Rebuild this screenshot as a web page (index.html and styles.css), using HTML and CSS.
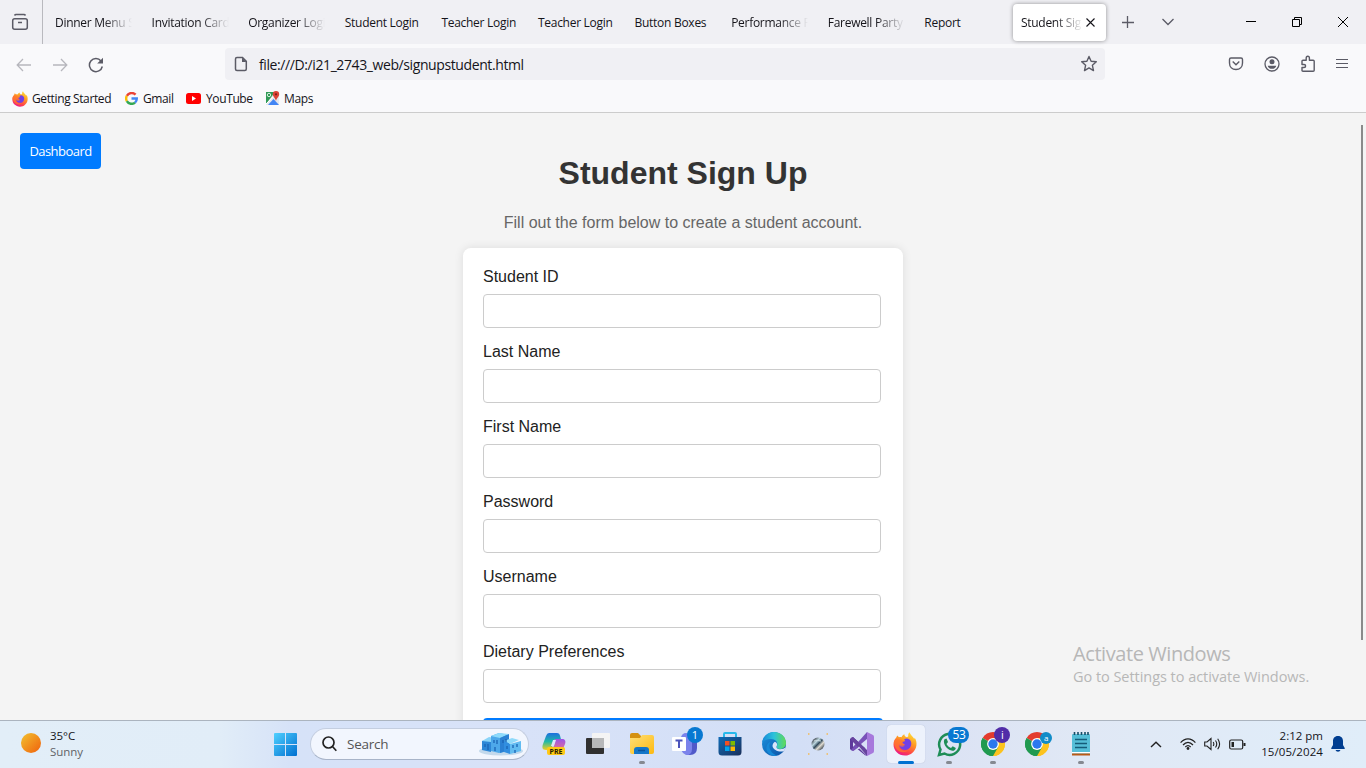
FILE: index.html
```html
<!DOCTYPE html>
<html lang="en">
<head>
<meta charset="utf-8">
<title>Student Sign Up</title>
<link rel="stylesheet" href="styles.css">
</head>
<body>
<svg class="defs" width="0" height="0">
  <defs>
    <linearGradient id="fxBody" x1=".8" y1="0" x2=".3" y2="1"><stop offset="0" stop-color="#ffe33c"/><stop offset=".4" stop-color="#ff9a22"/><stop offset=".75" stop-color="#ff4548"/><stop offset="1" stop-color="#e9158f"/></linearGradient>
    <linearGradient id="win" x1="0" y1="0" x2="1" y2="1"><stop offset="0" stop-color="#50d0ff"/><stop offset="1" stop-color="#006fd0"/></linearGradient>
    <linearGradient id="sun" x1="0" y1="0" x2="1" y2="1"><stop offset="0" stop-color="#f2c230"/><stop offset="1" stop-color="#f0600c"/></linearGradient>
    <linearGradient id="copA" x1="0" y1="0" x2="0" y2="1"><stop offset="0" stop-color="#1d6fe0"/><stop offset=".5" stop-color="#20b9a7"/><stop offset="1" stop-color="#f2cf20"/></linearGradient>
    <linearGradient id="copB" x1="0" y1="0" x2="0" y2="1"><stop offset="0" stop-color="#9b55e8"/><stop offset="1" stop-color="#ff7b72"/></linearGradient>
    <linearGradient id="folder" x1="0" y1="0" x2="1" y2="1"><stop offset="0" stop-color="#ffe07a"/><stop offset="1" stop-color="#fdb90f"/></linearGradient>
    <linearGradient id="edgeTop" x1="0" y1="0" x2="1" y2="0"><stop offset="0" stop-color="#1787d8"/><stop offset=".5" stop-color="#2bc2db"/><stop offset="1" stop-color="#62dc55"/></linearGradient>
    <linearGradient id="edgeLow" x1="0" y1="0" x2="1" y2="1"><stop offset="0" stop-color="#1a94e0"/><stop offset="1" stop-color="#0d4fa3"/></linearGradient>
    <linearGradient id="store" x1="0" y1="0" x2="1" y2="1"><stop offset="0" stop-color="#0f6cb8"/><stop offset="1" stop-color="#1b2f5a"/></linearGradient>
    <linearGradient id="planet" x1="0" y1="0" x2="1" y2="1"><stop offset=".1" stop-color="#2e3038"/><stop offset=".35" stop-color="#bcd6df"/><stop offset=".5" stop-color="#344c5c"/><stop offset=".65" stop-color="#e0dcd2"/><stop offset=".9" stop-color="#26303a"/></linearGradient>
    <symbol id="firefox" viewBox="0 0 24 24">
      <path d="M3.300 5.600L4.200 3.400 6 5.300C7 4.900 8 5 8.600 5.200 9 3.800 10 3 11.400 2.300 11.300 4 12.400 4.700 14 5.300L15.300 4.200C15 2.500 15.600 1.200 16.500.3 17.300 3 20 4.600 21.300 7L21.700 5.800C23.300 8.300 23.800 10.600 23.400 13.400 22.500 19.300 17.800 23.500 12 23.500 5.500 23.500.5 18.700.5 12.500.5 9.700 1.500 7.300 3.300 5.600Z" fill="url(#fxBody)"/>
      <path d="M14.200 6.500C17.800 7.500 19 10.500 18 13.500 17 16.800 13.800 18.500 10.700 17.800 7.600 17.100 6 14.600 6.500 12 8 13.800 10 14 12 12.300 9.600 12 9 10.700 9.500 9.600L12 8.900 11.200 7.200C12.200 7 13.200 6.400 14.200 6.500Z" fill="#7140e5"/>
      <path d="M1 9.500C3.200 6.800 6.400 6.500 9 8.200L12 9 9.500 10.500C8.500 11 8.500 12.300 8 13L12 13.400C9.600 15.500 7 15 5.600 12.500 5.400 17.500 11 20.200 15.500 18 9.500 23.500.5 18 1 9.500Z" fill="#ff7a2c" opacity=".7"/>
    </symbol>
    <symbol id="chrome" viewBox="0 0 24 24">
      <path d="M12 12L1.610 6A12 12 0 0 1 22.390 6Z" fill="#e33b2e"/>
      <path d="M12 12L22.390 6A12 12 0 0 1 12 24Z" fill="#fcc31e"/>
      <path d="M12 12V24A12 12 0 0 1 1.610 6Z" fill="#209a50"/>
      <path d="M12 6H22.390A12 12 0 0 1 12 24L17.200 15Z" fill="#fcc31e"/>
      <path d="M1.610 6L6.800 15 12 17.500 17.200 15 12 24A12 12 0 0 1 1.610 6Z" fill="#209a50"/>
      <circle cx="12" cy="12" r="5.900" fill="#fff"/><circle cx="12" cy="12" r="4.700" fill="#2b78ee"/>
    </symbol>
  </defs>
</svg>

<header class="browser">
  <div class="tabstrip">
    <div class="recent"><svg width="18" height="18" viewBox="0 0 18 18" fill="none" stroke="#5b5b66" stroke-width="1.500"><rect x="1.700" y="5.700" width="14.600" height="10.600" rx="2"/><path d="M3.500 2.500C4 1.700 4.500 1.500 5 1.500H13C13.500 1.500 14 1.700 14.500 2.500M7 9.500H11"/></svg></div>
    <nav class="tabs">
      <div class="tab"><span class="fade">Dinner Menu S</span></div>
      <div class="tab"><span class="fade">Invitation Card</span></div>
      <div class="tab"><span class="fade">Organizer Logi</span></div>
      <div class="tab"><span>Student Login</span></div>
      <div class="tab"><span>Teacher Login</span></div>
      <div class="tab"><span>Teacher Login</span></div>
      <div class="tab"><span>Button Boxes</span></div>
      <div class="tab"><span class="fade">Performance P</span></div>
      <div class="tab"><span class="fade">Farewell Party</span></div>
      <div class="tab"><span>Report</span></div>
    </nav>
    <div class="active-tab"><span class="fade short">Student Sign</span><svg width="9" height="9" viewBox="0 0 9 9" stroke="#15141a" stroke-width="1.100"><path d="M.5.5L8.500 8.500M8.500.5L.5 8.500"/></svg></div>
    <div class="tab-tools">
      <svg width="12" height="12" viewBox="0 0 12 12" stroke="#5b5b66" stroke-width="1.300"><path d="M5.500 0V12M0 6.500H12"/></svg>
      <svg width="12" height="8" viewBox="0 0 12 8" fill="none" stroke="#5b5b66" stroke-width="1.300"><path d="M.5 1L6 6.500 11.500 1"/></svg>
    </div>
    <div class="window-tools">
      <svg width="10" height="10" viewBox="0 0 10 10" stroke="#000"><path d="M0 4.500H10"/></svg>
      <svg width="10" height="10" viewBox="0 0 10 10" fill="none" stroke="#000"><path d="M.5 2.500H7.500V9.500H.5ZM2.500 2.500V.5H9.500V7.500H7.500"/></svg>
      <svg width="10" height="10" viewBox="0 0 10 10" stroke="#000"><path d="M0 0L10 10M10 0L0 10"/></svg>
    </div>
  </div>
  <div class="toolbar">
    <div class="history">
      <svg width="16" height="14" viewBox="0 0 16 14" fill="none" stroke="#b7b7bd" stroke-width="1.300"><path d="M15 7H1.500M7 1L1.200 7 7 13"/></svg>
      <svg width="16" height="14" viewBox="0 0 16 14" fill="none" stroke="#b7b7bd" stroke-width="1.300"><path d="M1 7H14.500M9 1L14.800 7 9 13"/></svg>
      <svg width="16" height="16" viewBox="0 0 16 16" fill="none" stroke="#5b5b66" stroke-width="1.500"><path d="M13 4A6.500 6.500 0 1 0 14.300 9.500"/><path d="M15 .7V6.500H9.200Z" fill="#5b5b66" stroke="none"/></svg>
    </div>
    <div class="address">
      <svg width="14" height="16" viewBox="0 0 14 16" fill="none" stroke="#5b5b66" stroke-width="1.500"><path d="M3 1.500H8.500L12.300 5.300V13Q12.300 14.500 10.800 14.500H3Q1.500 14.500 1.500 13V3Q1.500 1.500 3 1.500Z"/><path d="M8 1.500V6H12.500Z" fill="#5b5b66" stroke="none"/></svg>
      <span class="url">file:///D:/i21_2743_web/signupstudent.html</span>
      <svg class="star" width="18" height="18" viewBox="0 0 18 18" fill="none" stroke="#5b5b66" stroke-width="1.400" stroke-linejoin="round"><path d="M9 1.500L11.100 6.300 16.300 6.800 12.400 10.300 13.500 15.600 9 12.900 4.500 15.600 5.600 10.300 1.700 6.800 6.900 6.300Z"/></svg>
    </div>
    <div class="extensions">
      <svg width="16" height="16" viewBox="0 0 16 16" fill="none" stroke="#5b5b66" stroke-width="1.400"><path d="M3 2H13Q14.500 2 14.500 3.500V7C14.500 11 11.800 13.500 8 13.500S1.500 11 1.500 7V3.500Q1.500 2 3 2ZM4.700 5.500L8 8.700 11.300 5.500"/></svg>
      <svg width="16" height="16" viewBox="0 0 16 16" fill="none" stroke="#5b5b66" stroke-width="1.300"><circle cx="8" cy="8" r="7"/><circle cx="8" cy="5.700" r="2.500" fill="#5b5b66" stroke="none"/><path d="M3.700 9.700H12.300C12 11.700 10.200 12.800 8 12.800S4 11.700 3.700 9.700Z" fill="#5b5b66" stroke="none"/></svg>
      <svg width="16" height="18" viewBox="0 0 16 18" fill="none" stroke="#5b5b66" stroke-width="1.400" stroke-linejoin="round"><path d="M2 6Q2 5.200 3 5.200H6.200V3Q6.200 1.300 7.800 1.300T9.400 3V5.200H13.200Q14.200 5.200 14.200 6.200V15.200Q14.200 16.200 13.200 16.200H3Q2 16.200 2 15.200V12.500H4Q5.600 12.500 5.600 11T4 9.500H2Z"/></svg>
      <svg width="12" height="12" viewBox="0 0 12 12" stroke="#5b5b66" stroke-width="1.200"><path d="M0 1.500H12M0 5.500H12M0 9.500H12"/></svg>
    </div>
  </div>
  <div class="bookmarks">
    <a class="bookmark started"><svg width="16" height="16"><use href="#firefox"/></svg><span>Getting Started</span></a>
    <a class="bookmark gmail"><svg width="13" height="13" viewBox="0 0 24 24" fill="none" stroke-width="4.500"><path d="M19.500 5A10 10 0 0 0 3.400 7.200" stroke="#ea4335"/><path d="M3.400 7.200A10 10 0 0 0 3.400 16.800" stroke="#fbbc05"/><path d="M3.400 16.800A10 10 0 0 0 18.500 19.500" stroke="#34a853"/><path d="M18.500 19.500A9.800 9.800 0 0 0 21.700 12H12" stroke="#4285f4"/></svg><span>Gmail</span></a>
    <a class="bookmark youtube"><svg width="15" height="11" viewBox="0 0 15 11"><rect width="15" height="11" rx="2.500" fill="#f00"/><path d="M6 3.100V7.900L10 5.500Z" fill="#fff"/></svg><span>YouTube</span></a>
    <a class="bookmark maps"><svg width="15" height="15" viewBox="0 0 15 15"><path d="M1 1H14V14H1Z" fill="#e5e8ee"/><path d="M1 1H10L1 13Z" fill="#2f9a55"/><path d="M3 14L8.500 8 14 14Z" fill="#4285f4"/><path d="M.5 13.500L10 4" stroke="#fff" stroke-width="1"/><circle cx="4" cy="4" r="1.700" fill="none" stroke="#fff" stroke-width=".8"/><path d="M11 10C10.500 7 7.800 6 7.800 3.200A3.200 3.200 0 0 1 14.200 3.200C14.200 6 11.500 7 11 10Z" fill="#dc4336"/><circle cx="11" cy="3.300" r="1.100" fill="#7c1c17"/></svg><span>Maps</span></a>
  </div>
</header>

<main class="page">
  <button class="dashboard">Dashboard</button>
  <section class="signup">
    <h1>Student Sign Up</h1>
    <p class="intro">Fill out the form below to create a student account.</p>
    <form class="card">
      <label>Student ID<input type="text"></label>
      <label>Last Name<input type="text"></label>
      <label>First Name<input type="text"></label>
      <label>Password<input type="password"></label>
      <label>Username<input type="text"></label>
      <label>Dietary Preferences<input type="text"></label>
      <button class="submit" type="button"></button>
    </form>
  </section>
  <div class="scrollbar"></div>
  <aside class="watermark"><div class="activate">Activate Windows</div><div class="settings">Go to Settings to activate Windows.</div></aside>
</main>

<footer class="taskbar">
  <div class="weather"><svg width="22" height="22" viewBox="0 0 22 22"><circle cx="11" cy="10" r="10" fill="url(#sun)"/></svg><div><div>35°C</div><div class="muted">Sunny</div></div></div>
  <div class="start"><svg width="23" height="23" viewBox="0 0 23 23" fill="url(#win)"><path d="M0 1Q0 0 1 0H11V11H0ZM12 0H22Q23 0 23 1V11H12ZM0 12H11V23H1Q0 23 0 22ZM12 12H23V22Q23 23 22 23H12Z"/></svg></div>
  <div class="search">
    <svg width="15" height="16" viewBox="0 0 15 16" fill="none" stroke="#222" stroke-width="1.700"><circle cx="6.500" cy="6.500" r="5.500"/><path d="M10.500 10.500L14.300 14.700"/></svg>
    <span>Search</span>
    <svg class="village" width="44" height="24" viewBox="0 0 44 24"><ellipse cx="22" cy="19" rx="22" ry="4.500" fill="#c3d9ec"/><path d="M3 9L12 7V20L3 18Z" fill="#2c86d6"/><path d="M3 9L10 5 20 7 12 10Z" fill="#8ad4f8"/><path d="M12 4L20 1 30 3V19L20 21 12 19Z" fill="#4da8ea"/><path d="M12 4L20 1 30 2 21 6Z" fill="#8edafb"/><path d="M21 6L30 2V18L21 21Z" fill="#2a80d3"/><path d="M25 9L33 6 40 8 31 12Z" fill="#90dafa"/><path d="M25 9L31 12V22L25 20Z" fill="#318ee0"/><path d="M31 12L42 9V19L31 22Z" fill="#62bcf1"/><path d="M6 12V15M9 12V18M15 8V11M18 8V12M16 15V19M24 8V11M27 7V10M28 14V17M34 13V16M38 12V15M36 18V21" stroke="#1a64b5" stroke-width="1.300"/></svg>
  </div>
  <div class="apps">
    <div class="app"><svg width="26" height="26" viewBox="0 0 26 26"><path d="M8 2H16C19 2 19 5 20 8H14L10 19H5C1 19 1 16 2 13L5 5Q6 2 8 2Z" fill="url(#copA)"/><path d="M14 8H21C24 8 25 10 24 13L21 20Q20 23 17 23H9C12 22 12 18 13 14Z" fill="url(#copB)"/><path d="M12 9H15L13 15H10Z" fill="#dce7fb"/><rect x="6" y="16" width="18" height="8" rx="2" fill="#ffc915"/><text x="15" y="22.800" text-anchor="middle" class="pre">PRE</text></svg></div>
    <div class="app"><svg width="26" height="26" viewBox="0 0 26 26"><rect x="1" y="7" width="18" height="16" rx="1" fill="#303030"/><rect x="7" y="2" width="18" height="15" rx="1" fill="#f4f4f4"/><path d="M7 7H19V17H7Z" fill="#b7b8b9"/></svg></div>
    <div class="app running"><svg width="26" height="26" viewBox="0 0 26 26"><path d="M1 4Q1 2 3 2H9L12 5V8H1Z" fill="#d49112"/><path d="M1 7H11L13 4H23Q25 4 25 6V21Q25 23 23 23H3Q1 23 1 21Z" fill="url(#folder)"/><path d="M5 23V19Q5 16 8 16H17Q20 16 20 19V23Z" fill="#1477c9"/><path d="M9 19.500H16" stroke="#0b559c" stroke-width="1.500"/></svg></div>
    <div class="app"><svg width="30" height="28" viewBox="0 0 30 28"><circle cx="15" cy="8" r="5" fill="#7b83eb"/><path d="M12 11H26V18Q26 25 19 25 13 25 12 20Z" fill="#5059c9"/><path d="M12 10H21V19Q21 25 15 25 12 24 10 20Z" fill="#7b83eb"/><rect x="1" y="7" width="14" height="14" rx="1" fill="#fff"/><path d="M4.500 10.500H11.500M8 10.500V18" stroke="#4b53bc" stroke-width="2"/></svg><span class="badge one">1</span></div>
    <div class="app"><svg width="26" height="26" viewBox="0 0 26 26"><path d="M7 6V3Q7 2 8 2H18Q19 2 19 3V6" fill="none" stroke="#27b9eb" stroke-width="2"/><path d="M1.500 6H24.500V21Q24.500 24.500 21 24.500H5Q1.500 24.500 1.500 21Z" fill="url(#store)"/><path d="M8 10H12.500V14.500H8Z" fill="#f25022"/><path d="M13.500 10H18V14.500H13.500Z" fill="#7fba00"/><path d="M8 15.500H12.500V20H8Z" fill="#00a4ef"/><path d="M13.500 15.500H18V20H13.500Z" fill="#ffb900"/></svg></div>
    <div class="app"><svg width="24" height="24" viewBox="0 0 24 24"><circle cx="12" cy="12" r="12" fill="url(#edgeLow)"/><path d="M0 11C1 4.500 6 0 12 0 19 0 24 5 24 11 24 14.500 21.500 17 18 17 15 17 14 15.600 14.700 14.500 17 10 13 7 9 7 5 7 1.500 8.500 0 11Z" fill="url(#edgeTop)"/><path d="M8.500 10C5.500 14 8.500 22 15.500 23.500 9 25.500 3.500 20 4.500 15 5 12 6.500 10.500 8.500 10Z" fill="#1689d7"/><path d="M14.500 14.500C14 16 15.500 17.200 18 17.200 20.500 17.200 22 16.500 23.200 15.500 23.500 17 22.500 18.300 21.500 19.300 17 20.500 11 18 10.500 14 10.500 12.200 11.500 10.500 13 9.800 15.500 11 15.500 13 14.500 14.500Z" fill="#d9e5fa"/></svg></div>
    <div class="app"><svg width="24" height="24" viewBox="0 0 24 24"><circle cx="12" cy="12" r="6.500" fill="url(#planet)"/><path d="M8 9Q12 8 15 9" stroke="#d0e0e4" stroke-width="1" fill="none"/><path d="M2 2H3.500M20.500 2H22M2 22H3.500M20.500 22H22" stroke="#f4b955" stroke-width="1.500"/></svg></div>
    <div class="app"><svg width="24" height="24" viewBox="0 0 24 24"><path d="M1 6L3 5 15 16 17 24 1 18 0 17V7Z" fill="#5d399b"/><path d="M3 9V15L6 12Z" fill="#d8def5"/><path d="M1 18L17 0 18 8 3 19Z" fill="#7952b9"/><path d="M17 0L23 3Q24 3.500 24 5V19Q24 20.500 23 21L17 24Z" fill="#a779dc"/><path d="M1 6L3 5 17 18V24L1 8Z" fill="#68449f"/><path d="M17 7V17L11 12Z" fill="#dae0f7"/><path d="M4.500 19L9 14.500 17 24 9.500 16.500Z" fill="#d8e0f6"/><path d="M3 19.200L6.800 16.500 16 24H17L7 21.500Z" fill="#d8e0f6"/></svg></div>
    <div class="app current"><svg width="24" height="24"><use href="#firefox"/></svg></div>
    <div class="app running"><svg width="25" height="25" viewBox="0 0 25 25" fill="none" stroke="#1e8d57" stroke-width="2.500"><path d="M2 23L3.500 17.500A10.500 10.500 0 1 1 7.500 21.500Z"/><path d="M7.500 7.200L9.500 6.500 11 10 9.500 12C10.500 14 12 15.300 14 16L15.700 14.300 18.800 16C18.600 18 17 19 15.300 18.800 11 18 7.500 14 7 10.500 6.800 9 7 8 7.500 7.200Z" fill="#1e8d57" stroke="none"/></svg><span class="badge wide">53</span></div>
    <div class="app running"><svg width="24" height="24"><use href="#chrome"/></svg><span class="badge purple">i</span></div>
    <div class="app"><svg width="24" height="24"><use href="#chrome"/></svg><span class="badge small">a</span></div>
    <div class="app running"><svg width="20" height="26" viewBox="0 0 20 26"><rect x="1" y="3" width="18" height="20" rx="1" fill="#55bed7"/><path d="M1 21H19V22.500H1Z" fill="#fff"/><path d="M1 22.500H19V24.500H1Z" fill="#b85a17"/><path d="M3.500 1V4M7 1V4M10.500 1V4M14 1V4M17 1V4" stroke="#174e68" stroke-width="1.600"/><path d="M4 8.500H16M4 12.500H16M4 16.500H16" stroke="#155c79" stroke-width="1.600"/></svg></div>
  </div>
  <div class="tray">
    <svg class="chevron" width="12" height="7" viewBox="0 0 12 7" fill="none" stroke="#222" stroke-width="1.400"><path d="M1 6L6 1.200 11 6"/></svg>
    <svg width="16" height="12" viewBox="0 0 16 12" fill="none" stroke="#222" stroke-width="1.200"><path d="M.6 4.600C5-.4 11-.4 15.400 4.600M3 7C6.200 3.400 9.800 3.400 13 7M5.300 9C7 7.300 9 7.300 10.700 9"/><circle cx="8" cy="10.500" r="1.400" fill="#222" stroke="none"/></svg>
    <svg width="17" height="14" viewBox="0 0 17 14" fill="none" stroke="#222" stroke-width="1.100"><path d="M.7 5H3L7 1.500V12.500L3 9H.7ZM9.200 5Q10.500 7 9.200 9M11.500 3.500Q14 7 11.500 10.500M13.700 1.700Q17.500 7 13.700 12.300"/></svg>
    <svg width="17" height="11" viewBox="0 0 17 11" fill="none" stroke="#222" stroke-width="1.200"><rect x=".7" y="1" width="13" height="9" rx="1.500"/><path d="M2.500 3H5V8H2.500Z" fill="#222" stroke="none"/><path d="M15.500 4V7" stroke-width="2"/></svg>
    <div class="clock"><div>2:12 pm</div><div class="date">15/05/2024</div></div>
    <svg class="bell" width="14" height="16" viewBox="0 0 14 16" fill="#003e91"><path d="M7 0C3.500 0 2 2.500 2 5V9L.3 12V13H13.700V12L12 9V5C12 2.500 10.500 0 7 0ZM4.500 14H9.500Q9 15.700 7 15.700T4.500 14Z"/></svg>
  </div>
</footer>
</body>
</html>
```
FILE: styles.css
```css
* { box-sizing: border-box; }
body {
  margin: 0;
  width: 1366px;
  height: 768px;
  overflow: hidden;
  display: flex;
  flex-direction: column;
  font-family: "Open Sans", "Noto Sans", sans-serif;
  font-size: 12px;
  color: #15141a;
}
svg { display: block; flex: none; }
.defs { position: absolute; }

.browser { flex: none; height: 113px; background: #f9f9fb; border-bottom: 1px solid #ccc; }
.tabstrip { display: flex; align-items: center; height: 44px; background: #f0f0f4; letter-spacing: -0.28px; white-space: nowrap; }
.recent { width: 43px; height: 44px; padding: 13px 0 0 11px; border-right: 1px solid #b9b9be; }
.tabs { display: flex; }
.tab { width: 96.600px; padding-left: 12px; line-height: 18px; padding-top: 1px; }
.tab span { display: block; width: 80px; }
.tab .fade { mask-image: linear-gradient(to right, #000 48px, transparent 77px); }
.active-tab { display: flex; align-items: center; width: 93px; height: 37px; margin: 0 0 0 4px; padding: 1px 0 0 8px; background: #fff; border-radius: 4px; box-shadow: 0 0 4px rgba(0,0,0,.4); }
.active-tab .fade { width: 61px; margin-right: 4px; mask-image: linear-gradient(to right, #000 34px, transparent 62px); }
.tab-tools { display: flex; align-items: center; gap: 28px; margin-left: 16px; }
.window-tools { display: flex; gap: 36px; margin: 0 18px 0 auto; }

.toolbar { display: flex; align-items: center; height: 40px; padding-top: 1px; }
.history { display: flex; align-items: center; gap: 20px; width: 225px; padding-left: 16px; }
.address { display: flex; align-items: center; width: 880px; height: 32px; padding: 0 7px 0 9px; background: #f0f0f4; border-radius: 4px; margin-top: -1px; }
.url { margin-left: 11px; font-size: 14px; letter-spacing: -0.4px; }
.star { margin-left: auto; }
.extensions { display: flex; align-items: center; gap: 20.500px; margin: -1px 18px 0 auto; }
.extensions svg { margin-left: -.4px; }
.bookmarks { display: flex; align-items: center; height: 28px; padding: 1px 0 0 12px; letter-spacing: -0.38px; }
.bookmark { display: flex; align-items: center; white-space: nowrap; }
.started { width: 113px; gap: 4px; }
.gmail { width: 61px; gap: 5px; }
.youtube { width: 79px; gap: 5px; }
.maps { gap: 4px; }

.page { position: relative; flex: 1; min-height: 0; overflow: hidden; background: #f4f4f4; font-family: "Liberation Sans", Arial, sans-serif; }
.dashboard { position: absolute; left: 20px; top: 20px; width: 81px; height: 36px; padding: 0; border: 0; border-radius: 4px; background: #007bff; color: #fff; font: 13px "Open Sans", sans-serif; letter-spacing: -0.55px; }
.signup { width: 440px; margin: 0 auto; padding-top: 41px; text-align: center; }
.signup h1 { margin: 0; font-size: 32px; line-height: 38px; color: #333; }
.intro { margin: 21px 0 16px; font-size: 16px; line-height: 19px; color: #666; }
.card { height: 600px; padding: 19px 20px; background: #fff; border-radius: 8px; box-shadow: 0 0 10px rgba(0,0,0,.1); text-align: left; }
.card label { display: block; height: 75px; font-size: 16px; line-height: 19px; color: #222; }
.card input { display: block; width: 398px; height: 34px; margin-top: 8px; border: 1px solid #ccc; border-radius: 4px; background: #fff; }
.submit { display: block; width: 400px; height: 38px; margin-top: 1px; border: 0; border-radius: 4px; background: #007bff; }
.scrollbar { position: absolute; left: 1361px; top: 12px; width: 2px; height: 515px; background: #8a8a8a; }
.watermark { position: absolute; left: 1073px; top: 527px; font-family: "Open Sans", sans-serif; color: #b7b7b7; white-space: nowrap; }
.activate { font-size: 20px; line-height: 28px; letter-spacing: -0.42px; }
.settings { font-size: 14.500px; line-height: 18px; letter-spacing: -0.04px; }

.taskbar { display: flex; align-items: center; flex: none; height: 48px; border-top: 1px solid #abb4bf; background: linear-gradient(90deg, #e2eef8 0, #e1edf8 220px, #d6e2f8 290px, #d8e2f8 520px, #d3dff6 800px, #dce3f4 950px, #e0e8f5 1080px, #e0edf9 1366px); }
.weather { display: flex; align-items: center; gap: 8px; width: 274px; padding: 0 0 2px 20px; line-height: 16px; font-size: 11.500px; letter-spacing: -0.05px; }
.muted { color: #606367; }
.start { width: 36px; }
.search { display: flex; align-items: center; width: 219px; height: 32px; margin-top: -1px; padding: 0 5px 0 11px; border: 1px solid #c4cee0; border-bottom-color: #a8b4c9; border-radius: 16px; background: #f2f6fe; color: #555; font-size: 13.500px; letter-spacing: -0.25px; }
.search span { margin-left: 10px; }
.village { margin-left: auto; }
.apps { display: flex; margin: -1px 0 0 3px; }
.app { position: relative; display: flex; align-items: center; justify-content: center; width: 43.950px; height: 46px; }
.current::before { content: ""; position: absolute; z-index: 0; left: 3px; top: 4px; width: 38px; height: 38px; border-radius: 4px; background: #edf2fc; box-shadow: 0 0 1px #a9b4ca; }
.current svg { position: relative; z-index: 1; }
.running::after, .current::after { content: ""; position: absolute; left: 19px; bottom: 3px; width: 6px; height: 3px; border-radius: 2px; background: #858991; }
.current::after { left: 14px; width: 16px; background: #0071d1; }
.pre { font: bold 7px "Noto Sans", sans-serif; fill: #251c00; }
.badge { position: absolute; top: 6px; left: 23px; width: 16px; height: 16px; border-radius: 8px; background: #0878d1; color: #fff; font-size: 11px; line-height: 16px; text-align: center; }
.wide { left: 21px; width: 21px; font-size: 12px; letter-spacing: -0.3px; }
.purple { width: 16px; background: #512da8; }
.small { top: 11px; left: 25px; width: 12px; height: 12px; background: #118cc8; font-size: 8px; line-height: 11px; }
.tray { display: flex; align-items: center; gap: 8px; margin-left: auto; padding: 0 21px 1px 0; }
.chevron { margin-right: 10px; }
.clock { width: 69px; text-align: right; font-size: 11.500px; line-height: 16px; letter-spacing: 0; white-space: nowrap; }
.date { letter-spacing: .08px; }
```
